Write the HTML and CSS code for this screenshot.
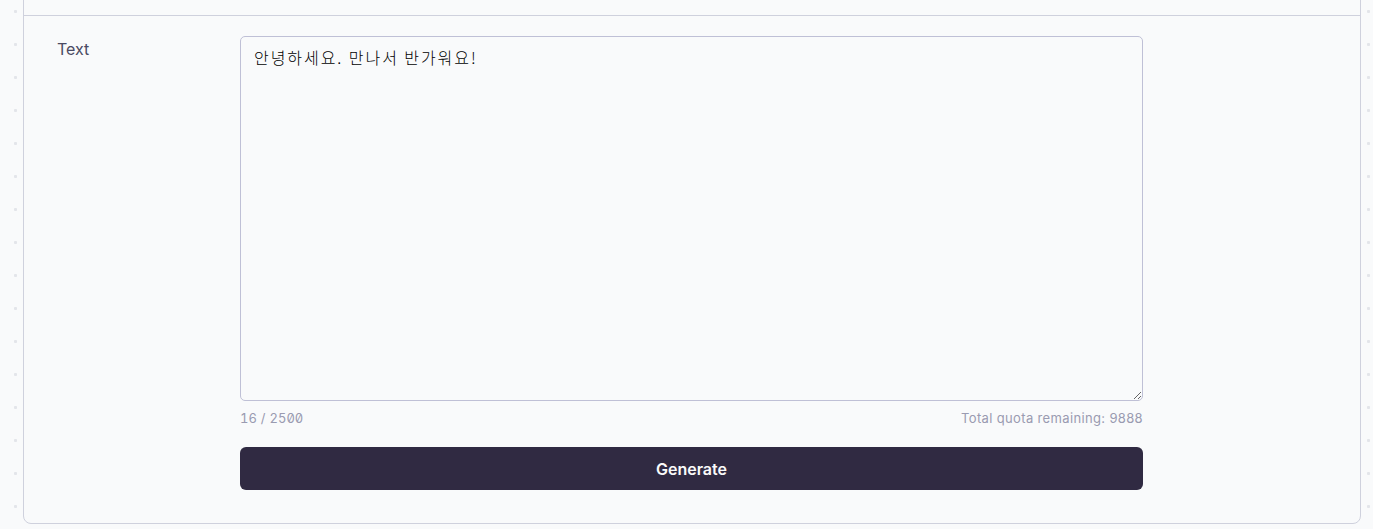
FILE: index.html
```html
<!DOCTYPE html>
<html lang="en">
<head>
<meta charset="utf-8">
<title>Text to speech</title>
<link rel="stylesheet" href="styles.css">
</head>
<body>
  <main class="card">
    <div class="card-head"></div>
    <div class="card-body">
      <div class="field">
        <label class="field-label" for="text">Text</label>
        <div class="field-control">
          <textarea id="text" class="textarea">안녕하세요. 만나서 반가워요!</textarea>
          <div class="meta">
            <span class="counter">16 / 2500</span>
            <span class="quota">Total quota remaining: 9888</span>
          </div>
          <button class="btn" type="button">Generate</button>
        </div>
      </div>
    </div>
  </main>
</body>
</html>
```
FILE: styles.css
```css
html, body {
  margin: 0;
  padding: 0;
}
body {
  background-color: #f9fafb;
  background-image: radial-gradient(circle at center, #e3e5ea 0, #e3e5ea 1.3px, transparent 1.8px);
  background-size: 33px 33px;
  background-position: -1px -5px;
  font-family: Inter, "Noto Sans", sans-serif;
  height: 529px;
  overflow: hidden;
}
.card {
  box-sizing: border-box;
  width: 1338px;
  margin: -20px 0 0 23px;
  background: #f9fafb;
  border: 1px solid #cfd1dd;
  border-radius: 8px;
}
.card-head {
  height: 34px;
  border-bottom: 1px solid #cfd1dd;
}
.card-body {
  padding: 20px 0 33px 33px;
}
.field {
  display: grid;
  grid-template-columns: 183px 903px;
}
.field-label {
  font-size: 16px;
  line-height: 24px;
  color: #4a4a62;
  padding-top: 1px;
}
.field-control {
  display: flex;
  flex-direction: column;
}
.textarea {
  box-sizing: border-box;
  width: 903px;
  height: 365px;
  margin: 0;
  padding: 8px 13px;
  border: 1px solid #bfc0d6;
  border-radius: 5px;
  background: #f9fafb;
  color: #000;
  font-family: "Noto Sans CJK KR", "Noto Sans", sans-serif;
  font-size: 16px;
  font-weight: 300;
  letter-spacing: 1.95px;
  line-height: 24px;
  resize: vertical;
  outline: none;
}
.meta {
  display: flex;
  justify-content: space-between;
  margin-top: 8px;
  font-size: 13px;
  line-height: 18px;
  color: #9a9bb1;
}
.counter {
  font-feature-settings: "tnum", "zero";
  word-spacing: 0.5px;
}
.quota {
  letter-spacing: 0.35px;
}
.btn {
  margin-top: 20px;
  height: 43px;
  border: 0;
  border-radius: 6px;
  background: #302a42;
  color: #fafafa;
  font-family: Inter, "Noto Sans", sans-serif;
  font-size: 16px;
  font-weight: 600;
  cursor: pointer;
}
```
